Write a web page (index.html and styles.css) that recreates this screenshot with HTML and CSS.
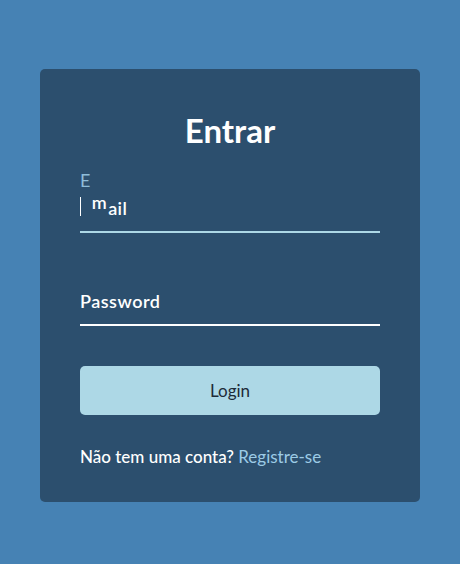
FILE: index.html
```html
<!DOCTYPE html>
<html lang="pt">
<head>
<meta charset="utf-8">
<title>Entrar</title>
<link rel="stylesheet" href="styles.css">
</head>
<body>
  <main class="page">
    <form class="card">
      <h2 class="title">Entrar</h2>
      <div class="field field-email">
        <input class="input input-email" type="email">
        <span class="caret"></span>
        <label class="label label-wave">
          <span class="w-e">E</span><span class="w-m">m</span><span class="w-ail">ail</span>
        </label>
      </div>
      <div class="field field-password">
        <input class="input input-password" type="password">
        <label class="label label-static">Password</label>
      </div>
      <button class="btn" type="button">Login</button>
      <p class="footer">Não tem uma conta? <a class="link" href="#">Registre-se</a></p>
    </form>
  </main>
</body>
</html>
```
FILE: styles.css
```css
* { box-sizing: border-box; }
html, body { margin: 0; padding: 0; }
body {
  background: #4682b4;
  font-family: Lato, "Open Sans", sans-serif;
  color: #fff;
}
.page {
  width: 460px;
  height: 564px;
  display: flex;
  justify-content: center;
  padding-top: 69px;
}
.card {
  width: 380px;
  height: 433px;
  background: #2c4f6e;
  border-radius: 5px;
  padding: 40px 40px 0;
  display: flex;
  flex-direction: column;
}
.title {
  margin: 0;
  text-align: center;
  font-size: 33px;
  line-height: 42px;
  font-weight: 700;
  color: #fff;
}
.field {
  position: relative;
  height: 52px;
}
.field-email { margin-top: 30px; }
.field-password { margin-top: 41px; }
.input {
  display: block;
  width: 100%;
  height: 52px;
  background: transparent;
  border: 0;
  border-bottom: 2px solid #fff;
  outline: none;
  color: #fff;
  font: inherit;
}
.input-email { border-bottom-color: #add8e6; }
.label {
  position: absolute;
  left: 0;
  top: 17px;
  font-size: 18px;
  line-height: 20px;
  letter-spacing: 0.4px;
  pointer-events: none;
}
.label-static { font-weight: 600; font-size: 18px; letter-spacing: 0.5px; }
.label-wave span { display: inline-block; font-weight: 600; }
.w-e { transform: translateY(-28px); color: #8fbdd9; font-weight: 400 !important; margin-right: 1px; }
.w-m { transform: translateY(-6px); margin-right: 1px; }
.caret {
  position: absolute;
  left: 0;
  top: 16px;
  width: 1px;
  height: 19px;
  background: #fff;
}
.btn {
  margin-top: 40px;
  height: 49px;
  width: 100%;
  border: 0;
  border-radius: 5px;
  background: #add8e6;
  color: #1d2b38;
  font: inherit;
  font-size: 17px;
}
.footer {
  margin: 32px 0 0;
  font-size: 17px;
  line-height: 20px;
  font-weight: 500;
}
.link {
  color: #9ccbe6;
  text-decoration: none;
  font-weight: 400;
}
```
